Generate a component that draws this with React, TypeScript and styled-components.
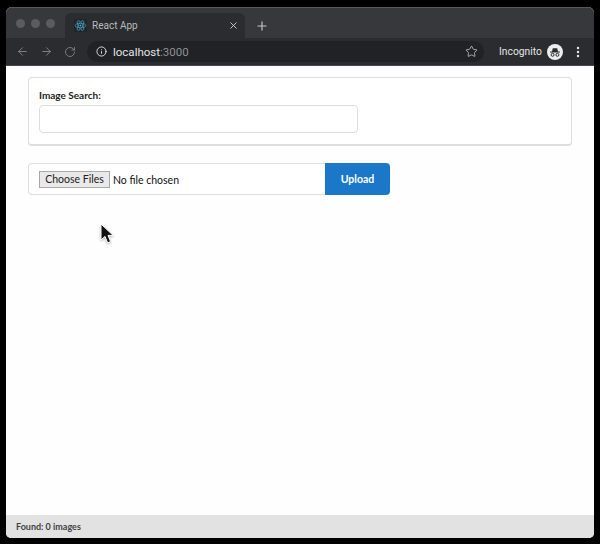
import styled, { createGlobalStyle } from 'styled-components';
import { ArrowLeft, ArrowRight, RotateCw, Info, Star, X, Plus, EllipsisVertical } from 'lucide-react';

const GlobalStyle = createGlobalStyle`
  html, body {
    margin: 0;
    padding: 0;
    background: #000;
    font-family: 'Lato', 'Liberation Sans', sans-serif;
  }
`;

const Window = styled.div`
  width: 588px;
  height: 531px;
  margin: 7px 6px 6px;
  display: flex;
  flex-direction: column;
  border-radius: 6px 6px 5px 5px;
  overflow: hidden;
  position: relative;
  background: #fefefe;
`;

const TabStrip = styled.div`
  height: 31px;
  flex: none;
  display: flex;
  align-items: flex-end;
  background: #36383c;
  border-top: 1px solid #55575a;
  box-sizing: border-box;
  padding-left: 10px;
`;

const Lights = styled.div`
  width: 49px;
  height: 25px;
  display: flex;
  align-items: center;
  gap: 6px;
  padding-bottom: 5px;
  box-sizing: border-box;
`;

const Light = styled.span`
  width: 9px;
  height: 9px;
  border-radius: 50%;
  background: #5a5c5f;
`;

const Tab = styled.div`
  width: 180px;
  height: 25px;
  display: flex;
  align-items: center;
  gap: 5px;
  padding: 0 6px 0 9px;
  box-sizing: border-box;
  background: #2a2c2f;
  border-radius: 6px 6px 0 0;
  color: #b8babc;
  font-family: 'Roboto', 'Liberation Sans', sans-serif;
  font-size: 10px;
`;

const TabTitle = styled.span`
  flex: 1;
`;

const NewTab = styled.div`
  display: flex;
  align-items: center;
  height: 25px;
  margin-left: 10px;
  color: #c4c6c8;
`;

const Toolbar = styled.div`
  height: 28px;
  flex: none;
  display: flex;
  align-items: center;
  padding: 0 9px 0 10px;
  box-sizing: border-box;
  background: #2a2c2f;
  border-bottom: 1px solid #45474a;
  color: #8b8d90;
`;

const NavIcons = styled.div`
  width: 71px;
  flex: none;
  display: flex;
  align-items: center;
  gap: 11px;
`;

const AddressBar = styled.div`
  width: 397px;
  height: 21px;
  flex: none;
  display: flex;
  align-items: center;
  gap: 6px;
  padding: 0 6px 0 9px;
  box-sizing: border-box;
  border-radius: 11px;
  background: #202225;
  color: #e4e5e6;
  font-family: 'Roboto', 'Liberation Sans', sans-serif;
  font-size: 11.5px;
`;

const Url = styled.span`
  flex: 1;

  span {
    color: #8f9194;
  }
`;

const Incognito = styled.div`
  flex: 1;
  display: flex;
  align-items: center;
  margin-left: 15px;
  color: #e4e5e6;
  font-family: 'Roboto', 'Liberation Sans', sans-serif;
  font-size: 10.3px;
`;

const Avatar = styled.svg`
  width: 16px;
  height: 16px;
  margin: 0 8px 0 5px;
`;

const Page = styled.main`
  flex: 1;
  padding: 11px 22px 0;
  color: #111;
`;

const Segment = styled.form`
  width: 544px;
  height: 69px;
  box-sizing: border-box;
  padding: 10px;
  border: 1px solid #dededf;
  border-bottom-width: 2px;
  border-radius: 4px;
  background: #fff;
`;

const Label = styled.label`
  display: block;
  height: 17px;
  font-size: 10px;
  font-weight: 700;
  line-height: 14px;
  color: #1d1d1d;
`;

const TextInput = styled.input`
  display: block;
  width: 319px;
  height: 28px;
  box-sizing: border-box;
  border: 1px solid #dcdde0;
  border-radius: 4px;
  background: #fff;
  outline: none;
`;

const UploadRow = styled.div`
  display: flex;
  width: 362px;
  height: 32px;
  margin-top: 17px;
`;

const FileBox = styled.div`
  width: 297px;
  box-sizing: border-box;
  display: flex;
  align-items: center;
  padding-left: 10px;
  border: 1px solid #dededf;
  border-right: none;
  border-radius: 4px 0 0 4px;
  background: #fff;
`;

const FileInput = styled.input`
  font-family: 'Lato', 'Liberation Sans', sans-serif;
  font-size: 10.5px;
  color: #111;

  &::file-selector-button {
    width: 71px;
    height: 17px;
    margin-right: 3px;
    padding: 0;
    box-sizing: border-box;
    border: 1px solid #a9a9a9;
    border-radius: 0;
    background: #e9e9e9;
    color: #222;
    font: inherit;
  }
`;

const UploadButton = styled.button`
  width: 65px;
  border: none;
  border-radius: 0 4px 4px 0;
  background: #1b78c9;
  color: #fff;
  font-family: 'Lato', 'Liberation Sans', sans-serif;
  font-size: 10.5px;
  font-weight: 700;
`;

const Cursor = styled.svg`
  position: absolute;
  left: 94px;
  top: 216px;
  width: 14px;
  height: 22px;
  filter: drop-shadow(0 1px 1px rgba(0, 0, 0, 0.3));
`;

const StatusBar = styled.footer`
  height: 23px;
  flex: none;
  display: flex;
  align-items: center;
  padding-left: 10px;
  background: #e2e2e2;
  color: #424242;
  font-size: 9px;
  font-weight: 700;
`;

function ReactLogo() {
  return (
    <svg width="13" height="13" viewBox="0 0 24 24" fill="none" stroke="#4f9fc4" strokeWidth="1.3">
      <rect width="24" height="24" rx="3" fill="#20262a" stroke="none" />
      <circle cx="12" cy="12" r="1.8" fill="#4f9fc4" stroke="none" />
      <ellipse cx="12" cy="12" rx="10" ry="4" />
      <ellipse cx="12" cy="12" rx="10" ry="4" transform="rotate(60 12 12)" />
      <ellipse cx="12" cy="12" rx="10" ry="4" transform="rotate(120 12 12)" />
    </svg>
  );
}

export default function App() {
  return (
    <>
      <GlobalStyle />
      <Window>
        <TabStrip>
          <Lights>
            <Light />
            <Light />
            <Light />
          </Lights>
          <Tab>
            <ReactLogo />
            <TabTitle>React App</TabTitle>
            <X size={11} strokeWidth={2} color="#d0d1d2" />
          </Tab>
          <NewTab>
            <Plus size={14} strokeWidth={2} />
          </NewTab>
        </TabStrip>
        <Toolbar>
          <NavIcons>
            <ArrowLeft size={13} strokeWidth={1.6} />
            <ArrowRight size={13} strokeWidth={1.6} />
            <RotateCw size={12} strokeWidth={1.6} />
          </NavIcons>
          <AddressBar>
            <Info size={11} strokeWidth={2} color="#e4e5e6" />
            <Url>
              localhost<span>:3000</span>
            </Url>
            <Star size={13} strokeWidth={1.5} color="#c6c7c9" />
          </AddressBar>
          <Incognito>
            Incognito
            <Avatar viewBox="0 0 16 16">
              <circle cx="8" cy="8" r="8" fill="#eceded" />
              <path d="M3 7.5h10v.9H3zM5 7.5l.8-3.3h4.4l.8 3.3z" fill="#2a2c2f" />
              <circle cx="5.6" cy="10.8" r="1.5" fill="none" stroke="#2a2c2f" />
              <circle cx="10.4" cy="10.8" r="1.5" fill="none" stroke="#2a2c2f" />
            </Avatar>
            <EllipsisVertical size={14} strokeWidth={2.2} />
          </Incognito>
        </Toolbar>
        <Page>
          <Segment>
            <Label htmlFor="search">Image Search:</Label>
            <TextInput id="search" type="text" />
          </Segment>
          <UploadRow>
            <FileBox>
              <FileInput type="file" multiple />
            </FileBox>
            <UploadButton type="button">Upload</UploadButton>
          </UploadRow>
        </Page>
        <StatusBar>Found: 0 images</StatusBar>
        <Cursor viewBox="0 0 14 22">
          <path
            d="M1 1v16l4-3.6 2.6 6.4 3-1.2-2.6-6.2h5.2z"
            fill="#111"
            stroke="#fff"
            strokeWidth="1"
          />
        </Cursor>
      </Window>
    </>
  );
}
